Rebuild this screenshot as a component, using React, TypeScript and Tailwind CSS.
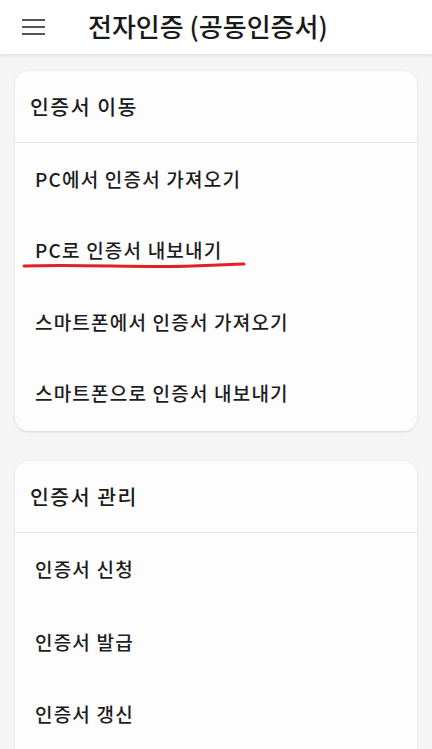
import React from 'react';

const FONT = { fontFamily: '"Noto Sans CJK KR", "Noto Sans", sans-serif' };

type Section = { title: string; items: string[]; rowH: string };

const sections: Section[] = [
  {
    title: '인증서 이동',
    items: ['PC에서 인증서 가져오기', 'PC로 인증서 내보내기', '스마트폰에서 인증서 가져오기', '스마트폰으로 인증서 내보내기'],
    rowH: 'h-[71.5px]',
  },
  {
    title: '인증서 관리',
    items: ['인증서 신청', '인증서 발급', '인증서 갱신'],
    rowH: 'h-[72.5px]',
  },
];

function Card({ section, first }: { section: Section; first: boolean }) {
  return (
    <div className={`bg-[#fdfdfd] rounded-[14px] shadow-[0_1px_3px_rgba(0,0,0,0.12)] overflow-hidden ${first ? 'pb-[2px]' : 'pb-[60px]'}`}>
      <div className="h-[72px] flex items-center px-[15px] border-b border-[#e6e6e6]">
        <span className="text-[20.5px] font-medium tracking-[1.5px] text-[#1c1c1c]">{section.title}</span>
      </div>
      {section.items.map((item, i) => (
        <div key={i} className={`relative ${section.rowH} flex items-center px-[20px]`}>
          <span className="text-[19px] font-medium tracking-[1.2px] text-[#1c1c1c]">{item}</span>
          {first && i === 1 && (
            <svg className="absolute left-[7px] top-[46px]" width="226" height="8" viewBox="0 0 226 8">
              <path d="M2 5 C 60 3, 120 7, 170 5 S 215 3, 222 3" stroke="#e02027" strokeWidth="3" fill="none" strokeLinecap="round" />
            </svg>
          )}
        </div>
      ))}
    </div>
  );
}

export default function App() {
  return (
    <div className="w-[432px] h-[749px] overflow-hidden bg-[#f5f5f5]" style={FONT}>
      <div className="relative z-10 h-[54px] bg-white flex items-center shadow-[0_2px_3px_rgba(0,0,0,0.08)]">
        <div className="w-[88px] pl-[22px]">
          <div className="flex flex-col gap-[5px] w-[23px]">
            <div className="h-[2px] bg-[#555]" />
            <div className="h-[2px] bg-[#555]" />
            <div className="h-[2px] bg-[#555]" />
          </div>
        </div>
        <h1 className="text-[26px] font-medium text-[#1a1a1a] -mt-[4px]">전자인증 (공동인증서)</h1>
      </div>
      <div className="px-[15px] pt-[17px] flex flex-col gap-[30px]">
        {sections.map((s, i) => (
          <Card key={i} section={s} first={i === 0} />
        ))}
      </div>
    </div>
  );
}
